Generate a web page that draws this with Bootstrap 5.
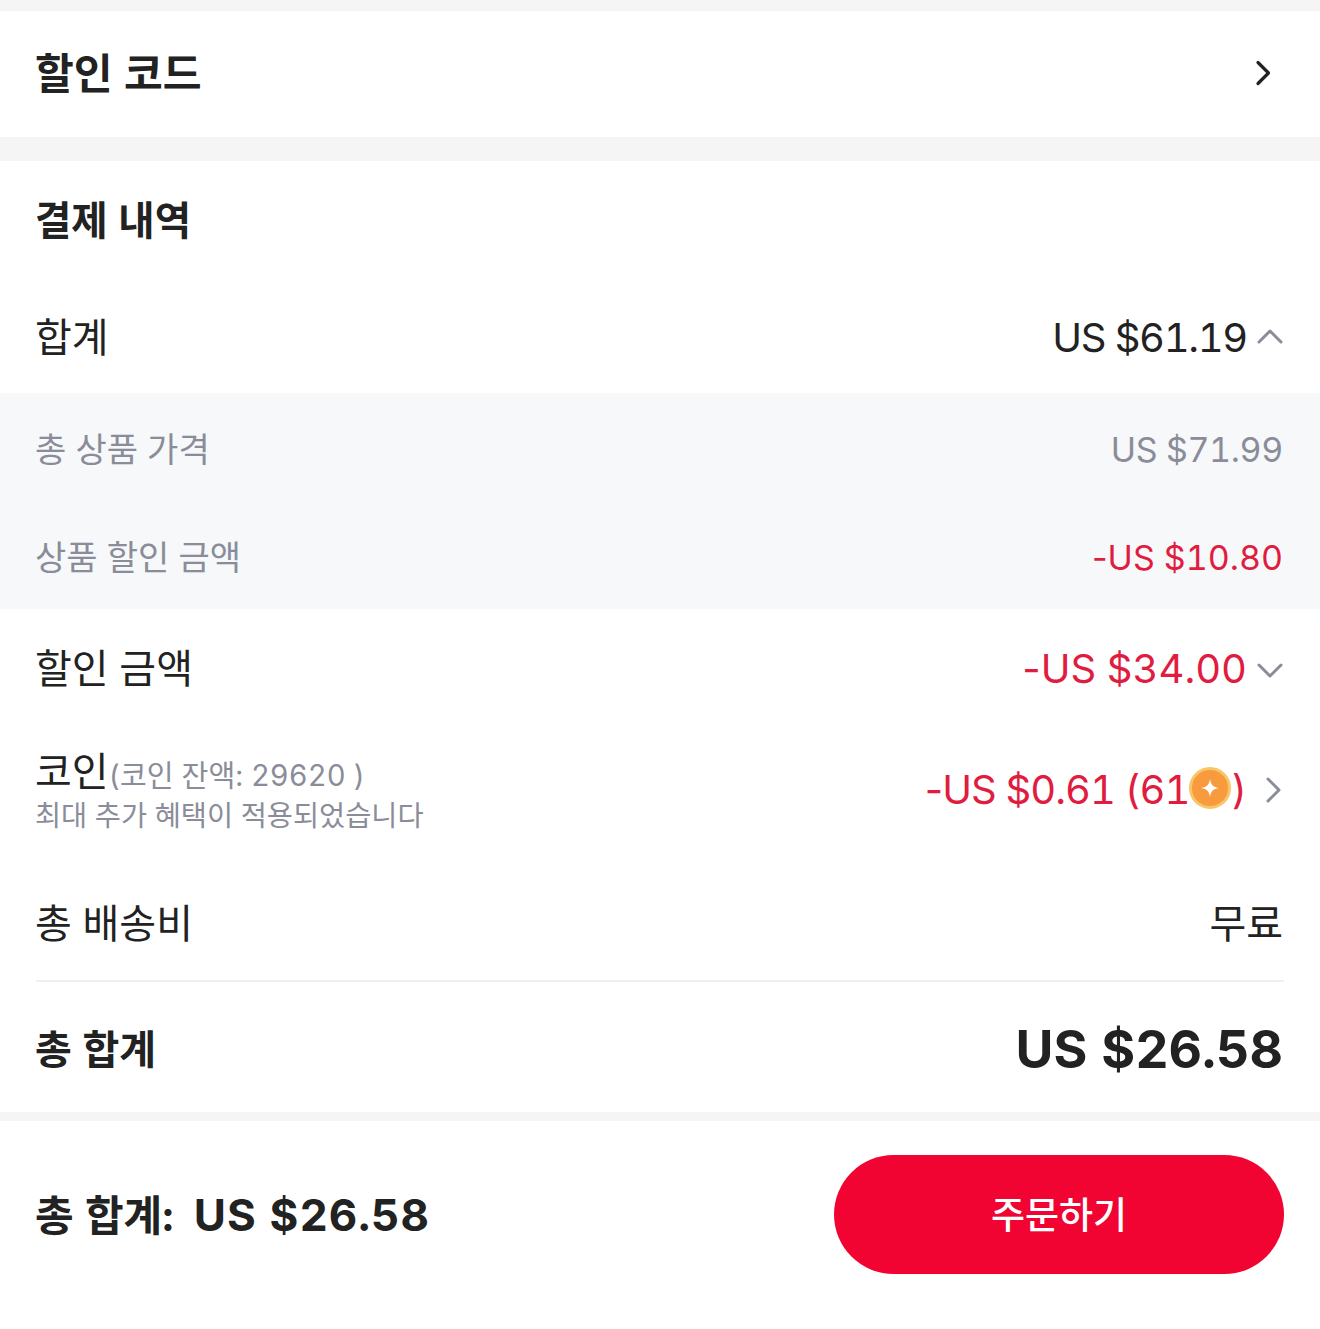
<!DOCTYPE html>
<html lang="ko">
<head>
  <meta charset="UTF-8" />
  <title>결제 내역</title>
  <link href="https://cdn.jsdelivr.net/npm/bootstrap@5.3.3/dist/css/bootstrap.min.css" rel="stylesheet" />
  <style>
    body {
      font-family: "Inter", "Noto Sans CJK KR", sans-serif;
      font-variant-numeric: tabular-nums;
      background-color: #fff;
      color: #222;
    }

    .page-wrap { height: 1329px; overflow: hidden; }
    .gap-top { height: 11px; background-color: #f5f5f5; }
    .gap-mid { height: 24px; background-color: #f5f5f5; }
    .gap-low { height: 9px; background-color: #f5f5f5; }

    .code-row { height: 126px; padding: 0 37px 0 35px; font-size: 42.2px; font-weight: 700; }
    .pay-title { height: 118px; padding: 4px 35px 0; font-size: 39.5px; font-weight: 700; }
    .sum-row { height: 114px; padding: 4px 37px 0 35px; font-size: 40px; }
    .sum-row.short { height: 116px; }
    .sub-box { background-color: #f7f8fa; color: #8a8d99; }
    .sub-row { height: 108px; padding: 4px 37px 0 35px; font-size: 34px; }
    .red-txt { color: #e01c40; }
    .dash { font-variant-numeric: normal; }
    .trim-sm { letter-spacing: -.35px; }
    .trim-md { letter-spacing: -.95px; }
    .trim-lg { letter-spacing: -1.3px; }
    .chev-gap { gap: 10px; }
    .coin-row { height: 124px; padding: 6px 37px 0 35px; font-size: 40px; }
    .coin-info { padding-top: 4px; }
    .coin-name { line-height: 44px; }
    .coin-note { font-size: 29.2px; color: #8a8d99; }
    .coin-sub { font-size: 28.4px; color: #8a8d99; line-height: 36px; }
    .coin-dot { width: 42px; height: 42px; border-radius: 50%; background-color: #f89b3e; border: 3px solid #f6c667; margin-top: -4px; }
    .ship-row { height: 133px; margin: 0 36px; padding: 18px 1px 0 0; font-size: 40px; border-bottom: 2px solid #efefef; }
    .ship-label { margin-left: -1px; }
    .total-row { height: 130px; padding: 6px 37px 0 35px; font-size: 40px; font-weight: 700; }
    .total-num { font-size: 51.8px; }
    .foot-row { height: 208px; padding: 0 36px 21px 35px; }
    .foot-total { font-size: 42px; font-weight: 700; }
    .foot-num { font-size: 44px; letter-spacing: 1px; margin-left: 9px; }
    .order-btn { width: 450px; height: 119px; padding-top: 8px; border-radius: 60px; background-color: #f10432; color: #fff; font-size: 37px; font-weight: 500; border: 0; }
    .chev { flex: none; }
    .chev-up { margin-top: -4px; }
    .chev-down { margin-top: 4px; }
  </style>
</head>
<body>
  <div class="page-wrap">
    <div class="gap-top"></div>
    <div class="code-row d-flex align-items-center justify-content-between">
      <span>할인 코드</span>
      <svg class="chev me-2" width="24" height="32" viewBox="0 0 24 32" fill="none" stroke="#222" stroke-width="3.2" stroke-linecap="round" stroke-linejoin="round"><path d="M7 4.5l10.5 10.5L7 25.5"/></svg>
    </div>
    <div class="gap-mid"></div>
    <div class="pay-title d-flex align-items-center">결제 내역</div>
    <div class="sum-row d-flex align-items-center justify-content-between">
      <span>합계</span>
      <span class="d-flex align-items-center chev-gap"><span class="trim-lg">US $61.19</span>
        <svg class="chev chev-up" width="26" height="16" viewBox="0 0 26 16" fill="none" stroke="#8a8d99" stroke-width="3" stroke-linecap="round" stroke-linejoin="round"><path d="M2 14L13 3l11 11"/></svg>
      </span>
    </div>
    <div class="sub-box">
      <div class="sub-row d-flex align-items-center justify-content-between"><span>총 상품 가격</span><span class="trim-sm">US $71.99</span></div>
      <div class="sub-row d-flex align-items-center justify-content-between"><span>상품 할인 금액</span><span class="red-txt"><span class="dash">-</span>US $10.80</span></div>
    </div>
    <div class="sum-row short d-flex align-items-center justify-content-between">
      <span>할인 금액</span>
      <span class="red-txt d-flex align-items-center chev-gap"><span><span class="dash">-</span>US $34.00</span>
        <svg class="chev chev-down" width="26" height="16" viewBox="0 0 26 16" fill="none" stroke="#8a8d99" stroke-width="3" stroke-linecap="round" stroke-linejoin="round"><path d="M2 2l11 11L24 2"/></svg>
      </span>
    </div>
    <div class="coin-row d-flex align-items-center justify-content-between">
      <div class="coin-info">
        <div class="coin-name d-flex align-items-baseline"><span>코인</span><span class="coin-note">(코인 잔액: 29620 )</span></div>
        <div class="coin-sub">최대 추가 혜택이 적용되었습니다</div>
      </div>
      <span class="red-txt d-flex align-items-center"><span class="trim-md"><span class="dash">-</span>US $0.61 (61</span><span class="coin-dot d-inline-flex align-items-center justify-content-center">
          <svg width="20" height="20" viewBox="0 0 22 22" fill="#fff"><path d="M11 1c1 6 3 9 10 10-7 1-9 4-10 10-1-6-3-9-10-10 7-1 9-4 10-10z"/></svg>
        </span>)
        <svg class="chev ms-3" width="20" height="28" viewBox="0 0 20 28" fill="none" stroke="#8a8d99" stroke-width="3" stroke-linecap="round" stroke-linejoin="round"><path d="M5 3l11 11L5 25"/></svg>
      </span>
    </div>
    <div class="ship-row d-flex align-items-center justify-content-between"><span class="ship-label">총 배송비</span><span>무료</span></div>
    <div class="total-row d-flex align-items-center justify-content-between"><span>총 합계</span><span class="total-num">US $26.58</span></div>
    <div class="gap-low"></div>
    <div class="foot-row d-flex align-items-center justify-content-between">
      <span class="foot-total">총 합계: <span class="foot-num">US $26.58</span></span>
      <button type="button" class="btn order-btn">주문하기</button>
    </div>
  </div>
</body>
</html>
